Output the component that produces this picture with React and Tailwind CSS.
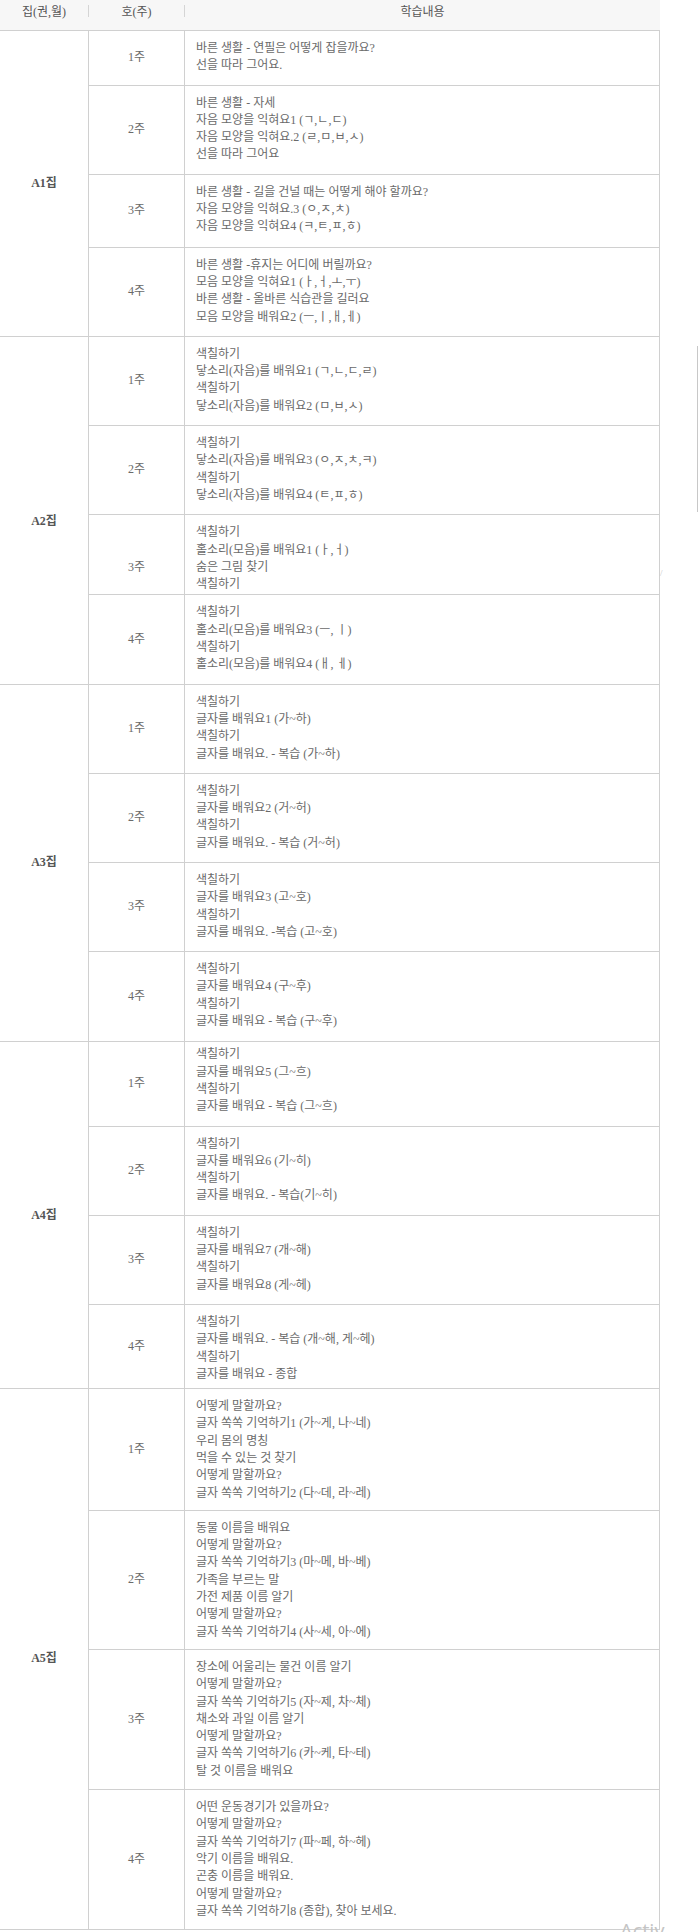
import React from 'react';

const groups = [
  {
    name: 'A1집',
    weeks: [
      { label: '1주', lines: ['바른 생활 - 연필은 어떻게 잡을까요?', '선을 따라 그어요.'] },
      {
        label: '2주',
        lines: ['바른 생활 - 자세', '자음 모양을 익혀요1 (ㄱ,ㄴ,ㄷ)', '자음 모양을 익혀요.2 (ㄹ,ㅁ,ㅂ,ㅅ)', '선을 따라 그어요'],
      },
      {
        label: '3주',
        pad: 'pt-[9px] pb-[11px]',
        lines: ['바른 생활 - 길을 건널 때는 어떻게 해야 할까요?', '자음 모양을 익혀요.3 (ㅇ,ㅈ,ㅊ)', '자음 모양을 익혀요4 (ㅋ,ㅌ,ㅍ,ㅎ)'],
      },
      {
        label: '4주',
        lines: ['바른 생활 -휴지는 어디에 버릴까요?', '모음 모양을 익혀요1 (ㅏ,ㅓ,ㅗ,ㅜ)', '바른 생활 - 올바른 식습관을 길러요', '모음 모양을 배워요2 (ㅡ,ㅣ,ㅐ,ㅔ)'],
      },
    ],
  },
  {
    name: 'A2집',
    nameClass: 'pt-[22px]',
    weeks: [
      { label: '1주', lines: ['색칠하기', '닿소리(자음)를 배워요1 (ㄱ,ㄴ,ㄷ,ㄹ)', '색칠하기', '닿소리(자음)를 배워요2 (ㅁ,ㅂ,ㅅ)'] },
      { label: '2주', lines: ['색칠하기', '닿소리(자음)를 배워요3 (ㅇ,ㅈ,ㅊ,ㅋ)', '색칠하기', '닿소리(자음)를 배워요4 (ㅌ,ㅍ,ㅎ)'] },
      {
        label: '3주',
        pad: 'pt-[9px] pb-[1px]',
        labelClass: 'items-start pt-[44px]',
        lines: ['색칠하기', '홀소리(모음)를 배워요1 (ㅏ,ㅓ)', '숨은 그림 찾기', '색칠하기'],
      },
      { label: '4주', lines: ['색칠하기', '홀소리(모음)를 배워요3 (ㅡ, ㅣ)', '색칠하기', '홀소리(모음)를 배워요4 (ㅐ, ㅔ)'] },
    ],
  },
  {
    name: 'A3집',
    weeks: [
      { label: '1주', lines: ['색칠하기', '글자를 배워요1 (가~하)', '색칠하기', '글자를 배워요. - 복습 (가~하)'] },
      { label: '2주', lines: ['색칠하기', '글자를 배워요2 (거~허)', '색칠하기', '글자를 배워요. - 복습 (거~허)'] },
      { label: '3주', lines: ['색칠하기', '글자를 배워요3 (고~호)', '색칠하기', '글자를 배워요. -복습 (고~호)'] },
      {
        label: '4주',
        pad: 'pt-[9px] pb-[11px]',
        lines: ['색칠하기', '글자를 배워요4 (구~후)', '색칠하기', '글자를 배워요 - 복습 (구~후)'],
      },
    ],
  },
  {
    name: 'A4집',
    weeks: [
      {
        label: '1주',
        pad: 'pt-[4px] pb-[10px]',
        lines: ['색칠하기', '글자를 배워요5 (그~흐)', '색칠하기', '글자를 배워요 - 복습 (그~흐)'],
      },
      { label: '2주', lines: ['색칠하기', '글자를 배워요6 (기~히)', '색칠하기', '글자를 배워요. - 복습(기~히)'] },
      { label: '3주', lines: ['색칠하기', '글자를 배워요7 (개~해)', '색칠하기', '글자를 배워요8 (게~헤)'] },
      {
        label: '4주',
        pad: 'pt-[9px] pb-[5px]',
        lines: ['색칠하기', '글자를 배워요. - 복습 (개~해, 게~헤)', '색칠하기', '글자를 배워요 - 종합'],
      },
    ],
  },
  {
    name: 'A5집',
    weeks: [
      {
        label: '1주',
        pad: 'pt-[9px] pb-[8px]',
        lines: [
          '어떻게 말할까요?',
          '글자 쏙쏙 기억하기1 (가~게, 나~네)',
          '우리 몸의 명칭',
          '먹을 수 있는 것 찾기',
          '어떻게 말할까요?',
          '글자 쏙쏙 기억하기2 (다~데, 라~레)',
        ],
      },
      {
        label: '2주',
        pad: 'pt-[9px] pb-[8px]',
        lines: [
          '동물 이름을 배워요',
          '어떻게 말할까요?',
          '글자 쏙쏙 기억하기3 (마~메, 바~베)',
          '가족을 부르는 말',
          '가전 제품 이름 알기',
          '어떻게 말할까요?',
          '글자 쏙쏙 기억하기4 (사~세, 아~에)',
        ],
      },
      {
        label: '3주',
        pad: 'pt-[9px] pb-[9px]',
        lines: [
          '장소에 어울리는 물건 이름 알기',
          '어떻게 말할까요?',
          '글자 쏙쏙 기억하기5 (자~제, 차~체)',
          '채소와 과일 이름 알기',
          '어떻게 말할까요?',
          '글자 쏙쏙 기억하기6 (카~케, 타~테)',
          '탈 것 이름을 배워요',
        ],
      },
      {
        label: '4주',
        pad: 'pt-[9px] pb-[9px]',
        lines: [
          '어떤 운동경기가 있을까요?',
          '어떻게 말할까요?',
          '글자 쏙쏙 기억하기7 (파~페, 하~헤)',
          '악기 이름을 배워요.',
          '곤충 이름을 배워요.',
          '어떻게 말할까요?',
          '글자 쏙쏙 기억하기8 (종합), 찾아 보세요.',
        ],
      },
    ],
  },
];

const WeekRow = ({ week, first }) => (
  <div className={first ? 'flex' : 'flex border-t border-[#d0d0d0]'}>
    <div
      className={`w-[96px] shrink-0 border-r border-[#d0d0d0] flex justify-center ${week.labelClass || 'items-center'}`}
    >
      {week.label}
    </div>
    <div className={`flex-1 pl-[11px] ${week.pad || 'pt-[9px] pb-[10px]'}`}>
      {week.lines.map((line, i) => (
        <div key={i}>{line}</div>
      ))}
    </div>
  </div>
);

const Group = ({ group }) => (
  <div className="flex border-t border-[#d0d0d0]">
    {/* rowspan column */}
    <div
      className={`w-[89px] shrink-0 border-r border-[#d0d0d0] flex items-center justify-center font-bold text-[#555] ${group.nameClass || ''}`}
    >
      {group.name}
    </div>
    <div className="flex-1 flex flex-col">
      {group.weeks.map((w, i) => (
        <WeekRow key={w.label} week={w} first={i === 0} />
      ))}
    </div>
  </div>
);

export default function App() {
  return (
    <div className="relative w-[699px] h-[1932px] overflow-hidden bg-white font-['Liberation_Serif','Noto_Sans_CJK_KR',serif] text-[12px] leading-[17.3px] text-[#6a6a6a]">
      {/* header */}
      <div className="w-[660px] h-[30px] bg-[#f7f7f7] flex text-[#555]">
        <div className="w-[88px] pt-[4px] text-center">집(권,월)</div>
        <div className="w-px h-[12px] mt-[5px] bg-[#d5d5d5]" />
        <div className="w-[95px] pt-[4px] text-center">호(주)</div>
        <div className="w-px h-[12px] mt-[5px] bg-[#d5d5d5]" />
        <div className="flex-1 pt-[4px] text-center">학습내용</div>
      </div>

      {/* body */}
      <div className="w-[660px] border-r border-b border-[#d0d0d0]">
        {groups.map(g => (
          <Group key={g.name} group={g} />
        ))}
      </div>

      {/* screen artifacts over the page */}
      <div className="absolute left-[697px] top-[346px] w-px h-[166px] bg-[#c8c8c8]" />
      <div className="absolute left-[660px] top-[569px] text-[9px] leading-none text-[#c8c8c8]">/</div>
      <div className="absolute left-[620px] top-[1921px] font-['Open_Sans',sans-serif] text-[20px] leading-none text-[#c4c4c4]">
        Activ
      </div>
    </div>
  );
}
